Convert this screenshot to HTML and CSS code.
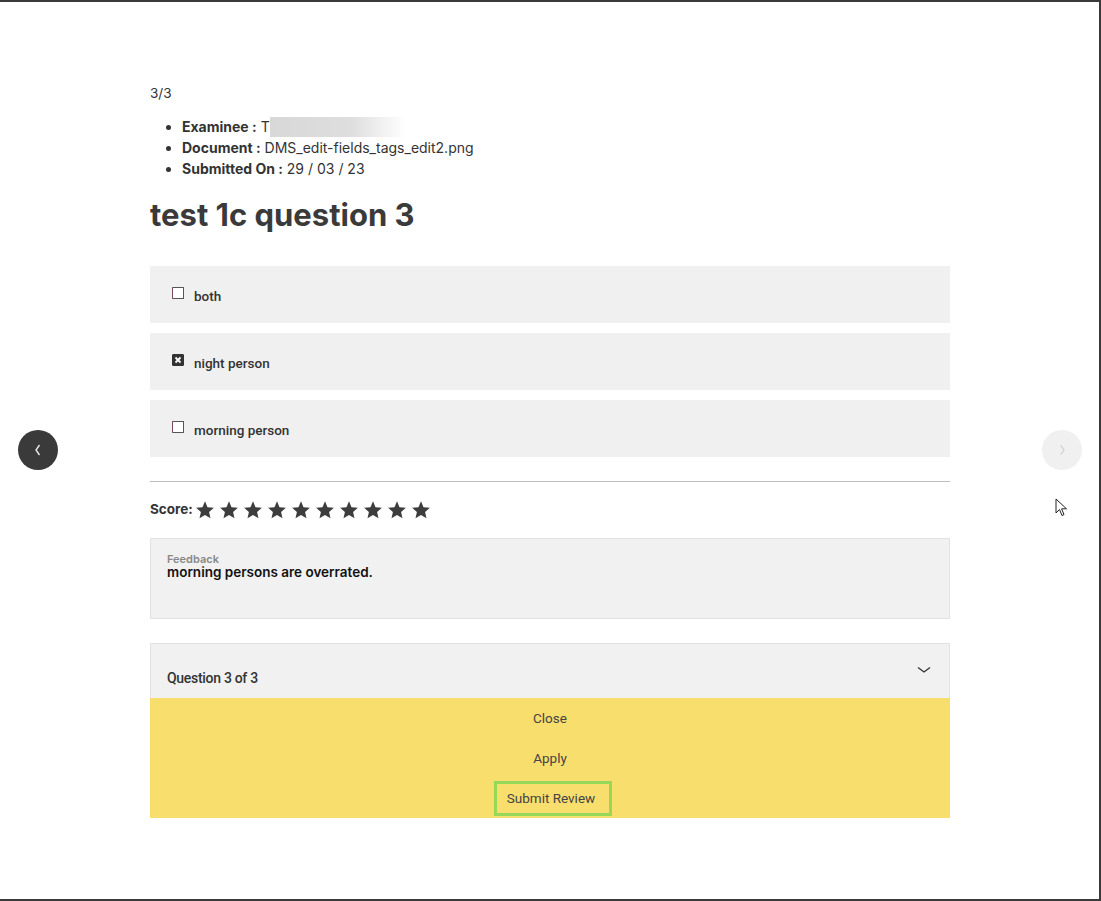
FILE: index.html
```html
<!DOCTYPE html>
<html>
<head>
<meta charset="utf-8">
<link rel="stylesheet" href="styles.css">
</head>
<body>
<div class="frame">
  <button class="nav nav-prev" aria-label="previous">
    <svg width="10" height="14" viewBox="0 0 10 14"><path d="M6.5 2 L3 7 L6.5 12" fill="none" stroke="#e8e8e8" stroke-width="1.4"/></svg>
  </button>
  <button class="nav nav-next" aria-label="next">
    <svg width="10" height="14" viewBox="0 0 10 14"><path d="M3.5 2 L7 7 L3.5 12" fill="none" stroke="#cfcfcf" stroke-width="1.2"/></svg>
  </button>
  <svg class="cursor" width="14" height="20" viewBox="0 0 14 20"><path d="M1 1 L1 15 L4.5 11.5 L7 17.5 L9 16.6 L6.6 10.8 L11.5 10.8 Z" fill="#fff" stroke="#222" stroke-width="1" stroke-linejoin="round"/></svg>

  <main class="content">
    <div class="count">3/3</div>
    <ul class="meta">
      <li><b>Examinee :</b> T<span class="blur"></span></li>
      <li><b>Document :</b> DMS_edit-fields_tags_edit2.png</li>
      <li><b>Submitted On :</b> 29 / 03 / 23</li>
    </ul>
    <h1 class="title">test 1c question 3</h1>

    <div class="options">
      <div class="option"><span class="check"></span><span>both</span></div>
      <div class="option"><span class="check checked"><svg width="8" height="8" viewBox="0 0 8 8"><path d="M1.5 1.5 L6.5 6.5 M6.5 1.5 L1.5 6.5" stroke="#fff" stroke-width="1.8"/></svg></span><span>night person</span></div>
      <div class="option"><span class="check"></span><span>morning person</span></div>
    </div>

    <hr class="divider">

    <div class="score">
      <span class="score-label">Score:</span>
      <span class="stars">
        <svg viewBox="0 0 24 24"><path d="M12 1.5 L15 8.6 L22.7 9.3 L16.9 14.3 L18.6 21.9 L12 17.9 L5.4 21.9 L7.1 14.3 L1.3 9.3 L9 8.6 Z"/></svg>
        <svg viewBox="0 0 24 24"><path d="M12 1.5 L15 8.6 L22.7 9.3 L16.9 14.3 L18.6 21.9 L12 17.9 L5.4 21.9 L7.1 14.3 L1.3 9.3 L9 8.6 Z"/></svg>
        <svg viewBox="0 0 24 24"><path d="M12 1.5 L15 8.6 L22.7 9.3 L16.9 14.3 L18.6 21.9 L12 17.9 L5.4 21.9 L7.1 14.3 L1.3 9.3 L9 8.6 Z"/></svg>
        <svg viewBox="0 0 24 24"><path d="M12 1.5 L15 8.6 L22.7 9.3 L16.9 14.3 L18.6 21.9 L12 17.9 L5.4 21.9 L7.1 14.3 L1.3 9.3 L9 8.6 Z"/></svg>
        <svg viewBox="0 0 24 24"><path d="M12 1.5 L15 8.6 L22.7 9.3 L16.9 14.3 L18.6 21.9 L12 17.9 L5.4 21.9 L7.1 14.3 L1.3 9.3 L9 8.6 Z"/></svg>
        <svg viewBox="0 0 24 24"><path d="M12 1.5 L15 8.6 L22.7 9.3 L16.9 14.3 L18.6 21.9 L12 17.9 L5.4 21.9 L7.1 14.3 L1.3 9.3 L9 8.6 Z"/></svg>
        <svg viewBox="0 0 24 24"><path d="M12 1.5 L15 8.6 L22.7 9.3 L16.9 14.3 L18.6 21.9 L12 17.9 L5.4 21.9 L7.1 14.3 L1.3 9.3 L9 8.6 Z"/></svg>
        <svg viewBox="0 0 24 24"><path d="M12 1.5 L15 8.6 L22.7 9.3 L16.9 14.3 L18.6 21.9 L12 17.9 L5.4 21.9 L7.1 14.3 L1.3 9.3 L9 8.6 Z"/></svg>
        <svg viewBox="0 0 24 24"><path d="M12 1.5 L15 8.6 L22.7 9.3 L16.9 14.3 L18.6 21.9 L12 17.9 L5.4 21.9 L7.1 14.3 L1.3 9.3 L9 8.6 Z"/></svg>
        <svg viewBox="0 0 24 24"><path d="M12 1.5 L15 8.6 L22.7 9.3 L16.9 14.3 L18.6 21.9 L12 17.9 L5.4 21.9 L7.1 14.3 L1.3 9.3 L9 8.6 Z"/></svg>
      </span>
    </div>

    <div class="feedback">
      <div class="feedback-label">Feedback</div>
      <div class="feedback-text">morning persons are overrated.</div>
    </div>

    <div class="accordion">
      <span class="acc-title">Question 3 of 3</span>
      <svg class="acc-chevron" width="14" height="8" viewBox="0 0 14 8"><path d="M1 1.5 L7 6 L13 1.5" fill="none" stroke="#333" stroke-width="1.3"/></svg>
    </div>
    <div class="actions">
      <button class="action">Close</button>
      <button class="action">Apply</button>
      <button class="action submit">Submit Review</button>
    </div>
  </main>
</div>
</body>
</html>
```
FILE: styles.css
```css
* { box-sizing: border-box; }
html, body { margin: 0; padding: 0; }
body {
  width: 1101px;
  height: 901px;
  background: #fff;
  font-family: Inter, "Liberation Sans", Arial, sans-serif;
  color: #333;
  overflow: hidden;
}
.frame {
  position: relative;
  width: 1101px;
  height: 901px;
  border-top: 2px solid #3a3a3a;
  border-right: 2px solid #3a3a3a;
  border-bottom: 2px solid #3a3a3a;
}
.content {
  width: 800px;
  margin: 0 0 0 150px;
  padding-top: 83px;
}
.count {
  font-size: 13.5px;
  line-height: 16px;
  color: #333;
}
.meta {
  margin: 15px 0 0 0;
  padding-left: 32px;
  font-size: 14px;
  line-height: 21px;
  color: #333;
}
.meta b { color: #333; font-weight: 700; }
.blur {
  display: inline-block;
  width: 136px;
  height: 20px;
  vertical-align: -5px;
  background: linear-gradient(90deg, #d8d8d8 0%, #dedede 60%, #ffffff 100%);
}
.title {
  margin: 17px 0 0 0;
  font-size: 31px;
  line-height: 38px;
  font-weight: 700;
  color: #3a3a3a;
}
.options {
  margin-top: 32px;
  display: flex;
  flex-direction: column;
  gap: 10px;
}
.option {
  height: 57px;
  background: #f0f0f0;
  display: flex;
  align-items: center;
  padding-left: 22px;
  gap: 10px;
  font-family: Roboto, "Liberation Sans", sans-serif;
  font-size: 13.5px;
  font-weight: 500;
  color: #333;
}
.option span:last-child { margin-top: 3px; }
.check {
  width: 12px;
  height: 12px;
  border: 1px solid #555;
  border-left-color: #7a4a5a;
  background: #fff;
  display: inline-flex;
  align-items: center;
  justify-content: center;
  margin-top: -3px;
  border-radius: 1px;
}
.check.checked {
  background: #333;
  border-color: #333;
}
.divider {
  margin: 24px 0 0 0;
  border: 0;
  border-top: 1px solid #bdbdbd;
  height: 0;
}
.score {
  margin-top: 15px;
  display: flex;
  align-items: center;
  gap: 2px;
}
.score-label {
  font-weight: 700;
  font-size: 13.5px;
  color: #333;
}
.stars { display: flex; gap: 4px; margin-top: 3px; }
.stars svg { width: 20px; height: 20px; fill: #3d3d3d; }
.feedback {
  margin-top: 18px;
  height: 81px;
  background: #f1f1f1;
  border: 1px solid #e2e2e2;
  padding: 14px 16px;
}
.feedback-label {
  font-size: 11px;
  font-weight: 600;
  color: #888;
  line-height: 12px;
}
.feedback-text {
  font-size: 13.5px;
  font-weight: 600;
  color: #111;
  line-height: 14px;
}
.accordion {
  margin-top: 24px;
  height: 55px;
  background: #f1f1f1;
  border: 1px solid #e2e2e2;
  border-bottom: 0;
  display: flex;
  align-items: flex-end;
  justify-content: space-between;
  padding: 0 17px 12px 16px;
  position: relative;
}
.acc-title {
  font-family: Roboto, "Liberation Sans", sans-serif;
  font-size: 14px;
  font-weight: 500;
  letter-spacing: -0.3px;
  color: #333;
}
.acc-chevron { position: absolute; right: 18px; top: 22px; }
.actions {
  background: #f8de6d;
  display: flex;
  flex-direction: column;
  align-items: center;
  padding: 3px 0 2px 0;
  gap: 5px;
}
.action {
  font-family: Roboto, "Liberation Sans", sans-serif;
  font-size: 13.5px;
  color: #444;
  background: transparent;
  border: 3px solid transparent;
  padding: 0 10px;
  height: 35px;
  line-height: 29px;
  cursor: pointer;
}
.action.submit {
  border-color: #96d85a;
  padding: 0 14px 0 10px;
  margin-left: 6px;
}
.nav {
  position: absolute;
  width: 40px;
  height: 40px;
  border-radius: 50%;
  border: 0;
  padding: 0;
  display: flex;
  align-items: center;
  justify-content: center;
  top: 428px;
}
.nav-prev { left: 18px; background: #3a3a3a; }
.nav-next { left: 1042px; background: #f0f0f0; }
.cursor { position: absolute; left: 1055px; top: 496px; }
```
